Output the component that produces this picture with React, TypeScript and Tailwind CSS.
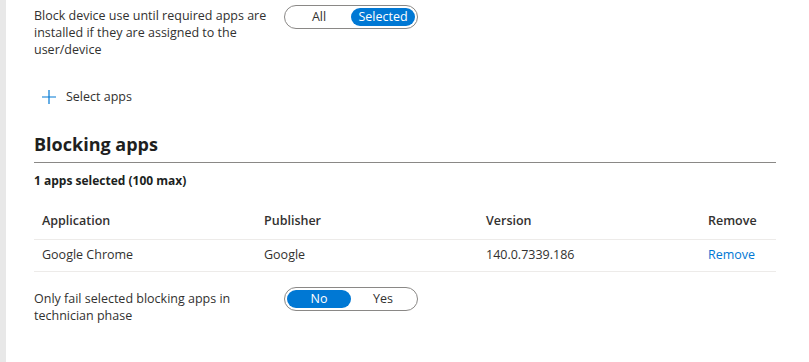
import React from "react";

type Row = { app: string; publisher: string; version: string };

const rows: Row[] = [{ app: "Google Chrome", publisher: "Google", version: "140.0.7339.186" }];

function Toggle({ left, right, active }: { left: string; right: string; active: "left" | "right" }) {
  const on = "bg-[#0078d4] text-white rounded-full";
  const off = "text-[#323130]";
  return (
    <div className="flex w-[134px] h-[24px] rounded-full border border-[#8a8886] p-[2px] text-[12.5px]">
      <div className={`flex-1 flex items-center justify-center ${active === "left" ? on : off}`}>{left}</div>
      <div className={`flex-1 flex items-center justify-center ${active === "right" ? on : off}`}>{right}</div>
    </div>
  );
}

export default function App() {
  return (
    <div className="flex h-[362px] w-[809px] bg-white text-[#323130] font-['Open_Sans',sans-serif] text-[12.5px]">
      <div className="w-[6px] shrink-0 bg-[#e8e8e8]" />
      <div className="flex-1 pl-[28px] pr-[33px]">
        <div className="flex items-start pt-[5px]">
          <p className="w-[250px] pt-[2px] leading-[17px] pr-[10px]">
            Block device use until required apps are installed if they are assigned to the user/device
          </p>
          <Toggle left="All" right="Selected" active="right" />
        </div>

        <button className="flex items-center gap-[9px] mt-[30px] ml-[7px]">
          <svg width="16" height="16" viewBox="0 0 16 16" fill="none" stroke="#0078d4" strokeWidth="1.2">
            <path d="M8 1v14M1 8h14" />
          </svg>
          <span>Select apps</span>
        </button>

        <h2 className="mt-[25px] text-[18px] font-bold leading-[24px] pb-[6px] border-b border-[#8a8886] text-[#201f1e]">Blocking apps</h2>
        <p className="mt-[10px] font-bold text-[12px] leading-[16px] text-[#201f1e]">1 apps selected (100 max)</p>

        <table className="mt-[15px] w-full text-left">
          <thead>
            <tr className="border-b border-[#edebe9]">
              <th className="font-semibold w-[222px] pl-[8px] h-[36px]">Application</th>
              <th className="font-semibold w-[222px] pl-[8px] h-[36px]">Publisher</th>
              <th className="font-semibold w-[222px] pl-[8px] h-[36px]">Version</th>
              <th className="font-semibold pl-[8px] h-[36px]">Remove</th>
            </tr>
          </thead>
          <tbody>
            {rows.map((r) => (
              <tr key={r.app} className="border-b border-[#edebe9]">
                <td className="pl-[8px] h-[32px]">{r.app}</td>
                <td className="pl-[8px] h-[32px]">{r.publisher}</td>
                <td className="pl-[8px] h-[32px]">{r.version}</td>
                <td className="pl-[8px] h-[32px] text-[#0078d4]">Remove</td>
              </tr>
            ))}
          </tbody>
        </table>

        <div className="flex items-start mt-[15px]">
          <p className="w-[250px] pt-[3px] leading-[17px] pr-[10px]">Only fail selected blocking apps in technician phase</p>
          <Toggle left="No" right="Yes" active="left" />
        </div>
      </div>
    </div>
  );
}
